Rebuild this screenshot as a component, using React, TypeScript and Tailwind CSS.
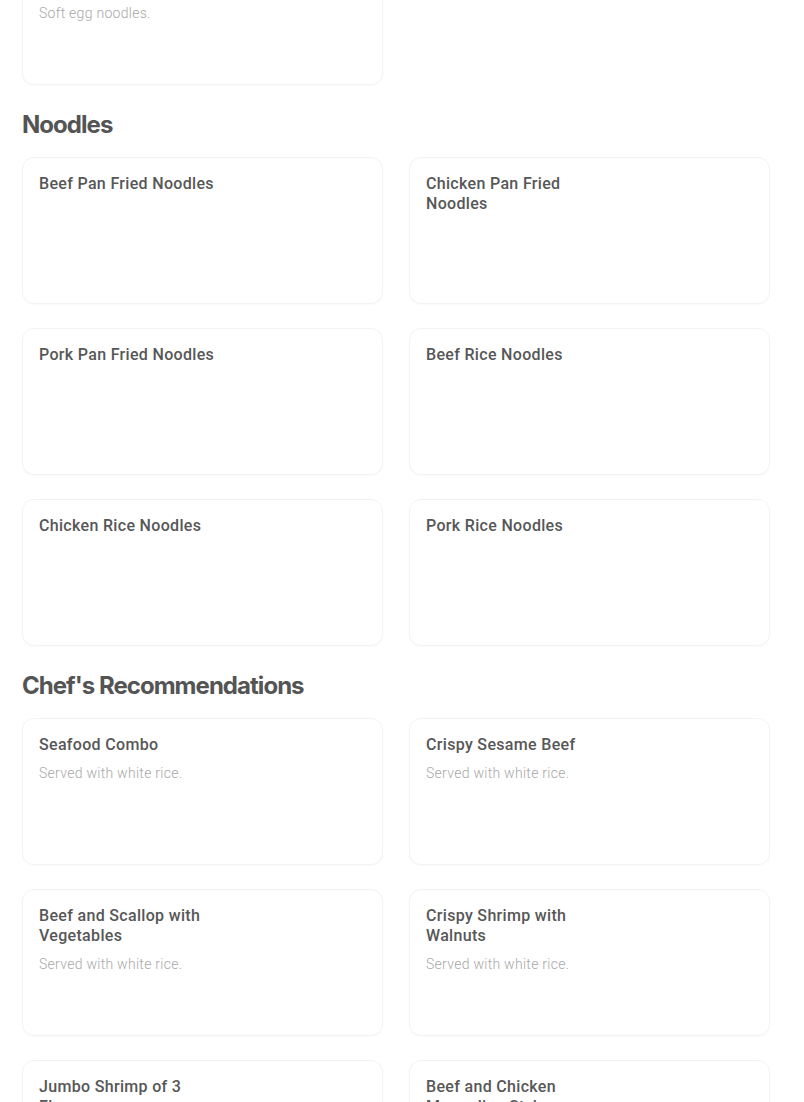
import React from "react";

type Item = { name: string; desc?: string };

const noodles: Item[] = [
  { name: "Beef Pan Fried Noodles" },
  { name: "Chicken Pan Fried Noodles" },
  { name: "Pork Pan Fried Noodles" },
  { name: "Beef Rice Noodles" },
  { name: "Chicken Rice Noodles" },
  { name: "Pork Rice Noodles" },
];

const chef: Item[] = [
  { name: "Seafood Combo", desc: "Served with white rice." },
  { name: "Crispy Sesame Beef", desc: "Served with white rice." },
  { name: "Beef and Scallop with Vegetables", desc: "Served with white rice." },
  { name: "Crispy Shrimp with Walnuts", desc: "Served with white rice." },
  { name: "Jumbo Shrimp of 3 Flavors", desc: "Served with white rice." },
  { name: "Beef and Chicken Mongolian Style", desc: "Served with white rice." },
];

function Card({ item }: { item: Item }) {
  return (
    <div className="h-[147px] rounded-xl border border-[#f3f3f3] bg-white px-4 pt-4 shadow-[0_1px_2px_rgba(0,0,0,0.025)]">
      <div className="max-w-[182px] text-base leading-5 font-medium tracking-[0.02em] text-[#575757]">{item.name}</div>
      {item.desc && (
        <div className="mt-2 text-sm leading-5 tracking-[0.02em] text-[#a8a8a8] font-light">{item.desc}</div>
      )}
    </div>
  );
}

function Section({ title, items }: { title: string; items: Item[] }) {
  return (
    <div className="mt-6">
      <h2
        className="text-2xl leading-8 font-bold tracking-[-0.04em] text-[#545454] mb-4"
        style={{ fontFamily: "Inter, 'Liberation Sans', sans-serif" }}
      >
        {title}
      </h2>
      <div className="grid grid-cols-[361px_361px] gap-x-[26px] gap-y-[24px]">
        {items.map((it) => (
          <Card key={it.name} item={it} />
        ))}
      </div>
    </div>
  );
}

export default function App() {
  return (
    <div className="h-[1102px] overflow-hidden bg-white pl-[22px]" style={{ fontFamily: "Roboto, 'Liberation Sans', sans-serif" }}>
      <div className="-mt-[62px] grid grid-cols-[361px_361px] gap-x-[26px]">
        <Card item={{ name: "Shrimp Pan Fried Noodles", desc: "Soft egg noodles." }} />
      </div>
      <Section title="Noodles" items={noodles} />
      <Section title="Chef's Recommendations" items={chef} />
    </div>
  );
}
